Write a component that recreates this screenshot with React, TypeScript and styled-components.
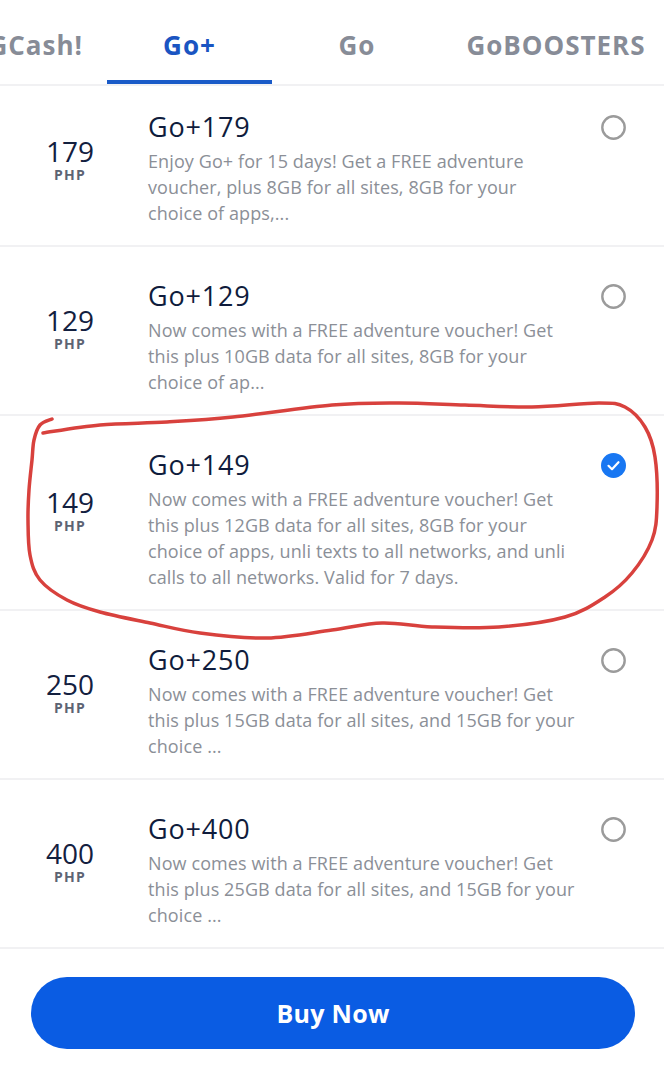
import React from 'react';
import styled, { createGlobalStyle } from 'styled-components';

const GlobalStyle = createGlobalStyle`
  body {
    margin: 0;
    background: #ffffff;
    font-family: "Open Sans", Lato, Arial, sans-serif;
  }
`;

type Plan = {
  price: string;
  name: string;
  lines: string[];
  selected?: boolean;
};

const plans: Plan[] = [
  {
    price: '179',
    name: 'Go+179',
    lines: [
      'Enjoy Go+ for 15 days! Get a FREE adventure',
      'voucher, plus 8GB for all sites, 8GB for your',
      'choice of apps,...',
    ],
  },
  {
    price: '129',
    name: 'Go+129',
    lines: [
      'Now comes with a FREE adventure voucher! Get',
      'this plus 10GB data for all sites, 8GB for your',
      'choice of ap...',
    ],
  },
  {
    price: '149',
    name: 'Go+149',
    selected: true,
    lines: [
      'Now comes with a FREE adventure voucher! Get',
      'this plus 12GB data for all sites, 8GB for your',
      'choice of apps, unli texts to all networks, and unli',
      'calls to all networks. Valid for 7 days.',
    ],
  },
  {
    price: '250',
    name: 'Go+250',
    lines: [
      'Now comes with a FREE adventure voucher! Get',
      'this plus 15GB data for all sites, and 15GB for your',
      'choice ...',
    ],
  },
  {
    price: '400',
    name: 'Go+400',
    lines: [
      'Now comes with a FREE adventure voucher! Get',
      'this plus 25GB data for all sites, and 15GB for your',
      'choice ...',
    ],
  },
];

// hand drawn circle round the selected plan
const markPoints: [number, number][] = [
  [52, 419], [40, 425], [34, 440], [32, 460], [29, 490], [28, 520], [30, 555],
  [40, 580], [67, 600], [100, 612], [150, 623], [200, 633], [267, 638], [332, 630],
  [382, 623], [432, 627], [499, 627], [565, 617], [605, 597], [632, 573], [652, 540],
  [657, 507], [655, 457], [645, 427], [625, 407], [599, 403], [532, 407], [465, 405],
  [399, 403], [332, 405], [233, 417], [167, 422], [100, 425], [43, 433],
];

const smoothPath = (pts: [number, number][]) => {
  let d = `M ${pts[0][0]} ${pts[0][1]}`;
  for (let i = 0; i < pts.length - 1; i++) {
    const p0 = pts[i - 1] || pts[i];
    const p1 = pts[i];
    const p2 = pts[i + 1];
    const p3 = pts[i + 2] || p2;
    const c1x = p1[0] + (p2[0] - p0[0]) / 6;
    const c1y = p1[1] + (p2[1] - p0[1]) / 6;
    const c2x = p2[0] - (p3[0] - p1[0]) / 6;
    const c2y = p2[1] - (p3[1] - p1[1]) / 6;
    d += ` C ${c1x} ${c1y} ${c2x} ${c2y} ${p2[0]} ${p2[1]}`;
  }
  return d;
};

export default function App() {
  return (
    <>
      <GlobalStyle />
      <Page>
        <TabBar>
          <Tab width={107} alignEnd>GCash!</Tab>
          <Tab width={165} active>Go+</Tab>
          <Tab width={170}>Go</Tab>
          <Tab width={228}>GoBOOSTERS</Tab>
        </TabBar>

        <PlanList>
          {plans.map((plan) => (
            <PlanRow key={plan.name}>
              <PriceCol>
                <PriceValue>{plan.price}</PriceValue>
                <Currency>PHP</Currency>
              </PriceCol>
              <PlanBody>
                <PlanName>{plan.name}</PlanName>
                <PlanDesc>
                  {plan.lines.map((line) => (
                    <DescLine key={line}>{line}</DescLine>
                  ))}
                </PlanDesc>
              </PlanBody>
              <RadioCol>
                {plan.selected ? (
                  <svg width="25" height="25" viewBox="0 0 25 25">
                    <circle cx="12.5" cy="12.5" r="12.5" fill="#1877f2" />
                    <path d="M7.5 12.8 L11 16.2 L17.5 9.2" fill="none" stroke="#fff" strokeWidth="2.2" strokeLinecap="round" strokeLinejoin="round" />
                  </svg>
                ) : (
                  <svg width="25" height="25" viewBox="0 0 25 25">
                    <circle cx="12.5" cy="12.5" r="11.2" fill="none" stroke="#9b9b9b" strokeWidth="2.4" />
                  </svg>
                )}
              </RadioCol>
            </PlanRow>
          ))}
        </PlanList>

        <Footer>
          <BuyButton>Buy Now</BuyButton>
        </Footer>

        <Annotation width="664" height="1080" viewBox="0 0 664 1080">
          <path d={smoothPath(markPoints)} fill="none" stroke="#d8413d" strokeWidth="3.5" strokeLinecap="round" strokeLinejoin="round" />
        </Annotation>
      </Page>
    </>
  );
}

const Page = styled.div`
  position: relative;
  width: 664px;
  height: 1080px;
  overflow: hidden;
  background: #ffffff;
  display: flex;
  flex-direction: column;
`;

const TabBar = styled.div`
  display: flex;
  height: 84px;
  flex-shrink: 0;
  border-bottom: 2px solid #f1f1f3;
  overflow: hidden;
`;

const Tab = styled.div<{ width: number; active?: boolean; alignEnd?: boolean }>`
  position: relative;
  flex-shrink: 0;
  width: ${(p) => p.width}px;
  display: flex;
  align-items: center;
  justify-content: ${(p) => (p.alignEnd ? 'flex-end' : 'center')};
  padding-right: ${(p) => (p.alignEnd ? '24px' : '0')};
  padding-top: 6px;
  box-sizing: border-box;
  font-size: 26px;
  font-weight: 700;
  letter-spacing: 1px;
  white-space: nowrap;
  color: ${(p) => (p.active ? '#1a55c2' : '#878c97')};

  &::after {
    content: '';
    display: ${(p) => (p.active ? 'block' : 'none')};
    position: absolute;
    left: 0;
    right: 0;
    bottom: 0;
    height: 4px;
    background: #1a5bc8;
  }
`;

const PlanList = styled.div`
  margin-top: -8px;
  display: flex;
  flex-direction: column;
`;

const PlanRow = styled.div`
  display: flex;
  align-items: stretch;
  padding: 34px 0 19px;
  border-bottom: 2px solid #f1f1f3;
`;

const PriceCol = styled.div`
  width: 140px;
  flex-shrink: 0;
  display: flex;
  flex-direction: column;
  align-items: center;
  justify-content: center;
  padding-bottom: 22px;
`;

const PriceValue = styled.div`
  font-size: 28px;
  line-height: 32px;
  font-weight: 500;
  color: #13203f;
`;

const Currency = styled.div`
  font-size: 14px;
  line-height: 15px;
  font-weight: 700;
  letter-spacing: 1.2px;
  color: #5d6473;
`;

const PlanBody = styled.div`
  flex: 1;
  padding-left: 8px;
  display: flex;
  flex-direction: column;
  gap: 6px;
`;

const PlanName = styled.div`
  font-size: 27px;
  line-height: 30px;
  font-weight: 500;
  letter-spacing: 0.8px;
  color: #0f1c3c;
`;

const PlanDesc = styled.div`
  display: flex;
  flex-direction: column;
`;

const DescLine = styled.div`
  font-size: 18px;
  line-height: 26px;
  letter-spacing: 0.1px;
  color: #8b8f97;
  white-space: nowrap;
`;

const RadioCol = styled.div`
  width: 25px;
  flex-shrink: 0;
  margin: 3px 38px 0 0;
`;

const Footer = styled.div`
  padding: 28px 29px 0 31px;
`;

const BuyButton = styled.button`
  width: 100%;
  height: 72px;
  border: none;
  border-radius: 36px;
  background: #0a5ce3;
  color: #ffffff;
  font-family: "Open Sans", Arial, sans-serif;
  font-size: 25px;
  font-weight: 700;
  letter-spacing: 0.3px;
`;

const Annotation = styled.svg`
  position: absolute;
  top: 0;
  left: 0;
  pointer-events: none;
`;
